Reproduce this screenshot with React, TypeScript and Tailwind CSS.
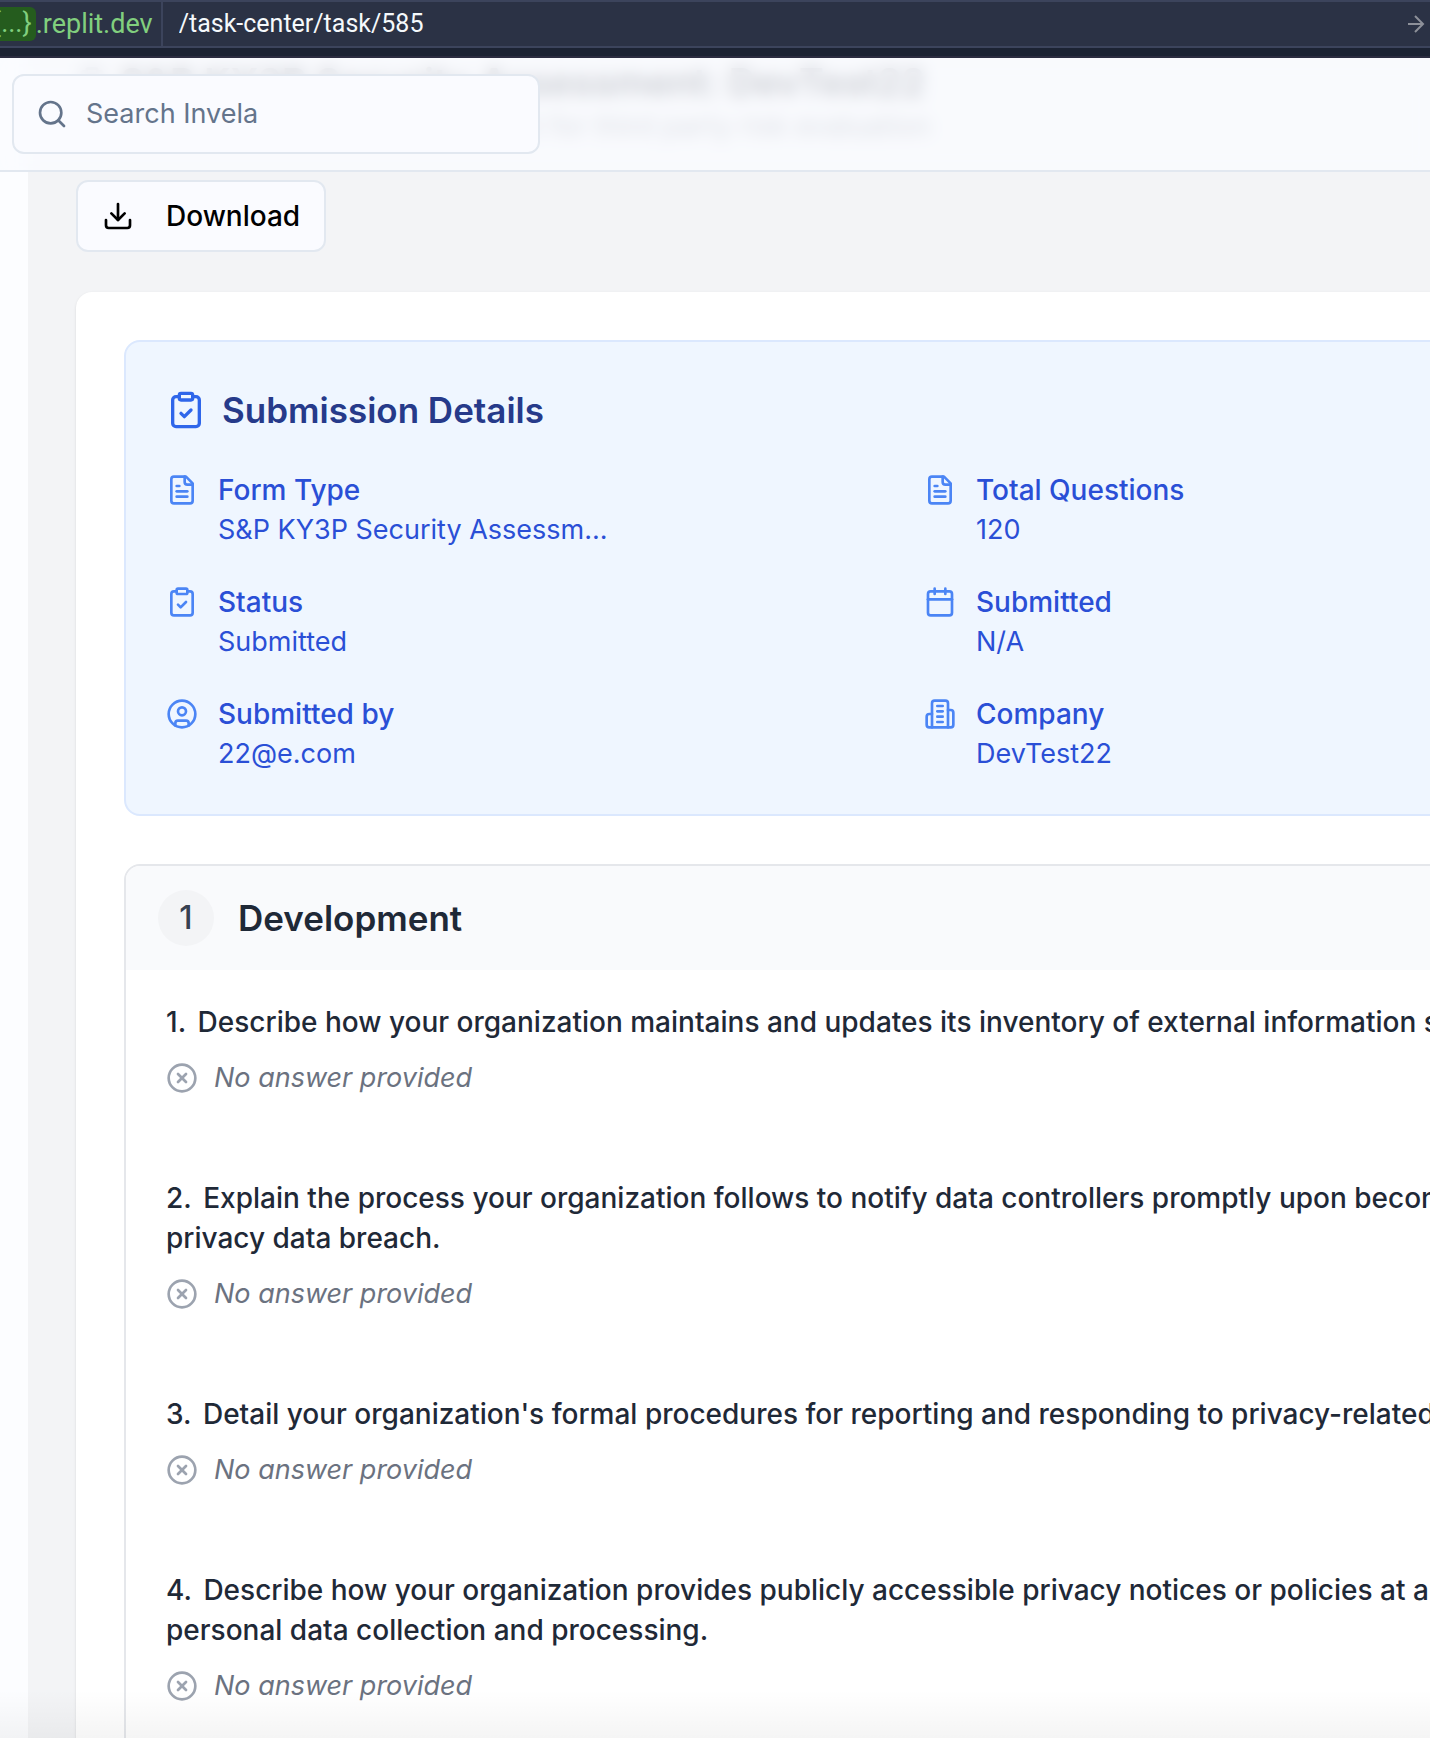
import type { ReactNode } from "react";

type IconProps = { className?: string; children?: ReactNode };

function Icon({ className, children }: IconProps) {
  return (
    <svg
      viewBox="0 0 24 24"
      fill="none"
      stroke="currentColor"
      strokeWidth={2}
      strokeLinecap="round"
      strokeLinejoin="round"
      aria-hidden="true"
      className={className}
    >
      {children}
    </svg>
  );
}

const SearchIcon = ({ className }: IconProps) => (
  <Icon className={className}>
    <circle cx="11" cy="11" r="8" />
    <path d="m21 21-4.3-4.3" />
  </Icon>
);

const DownloadIcon = ({ className }: IconProps) => (
  <Icon className={className}>
    <path d="M21 15v4a2 2 0 0 1-2 2H5a2 2 0 0 1-2-2v-4" />
    <path d="m7 10 5 5 5-5" />
    <path d="M12 15V3" />
  </Icon>
);

const ClipboardIcon = ({ className }: IconProps) => (
  <Icon className={className}>
    <rect width="8" height="4" x="8" y="2" rx="1" ry="1" />
    <path d="M16 4h2a2 2 0 0 1 2 2v14a2 2 0 0 1-2 2H6a2 2 0 0 1-2-2V6a2 2 0 0 1 2-2h2" />
    <path d="m9 14 2 2 4-4" />
  </Icon>
);

const FileIcon = ({ className }: IconProps) => (
  <Icon className={className}>
    <path d="M15 2H6a2 2 0 0 0-2 2v16a2 2 0 0 0 2 2h12a2 2 0 0 0 2-2V7Z" />
    <path d="M14 2v4a2 2 0 0 0 2 2h4" />
    <path d="M10 9H8" />
    <path d="M16 13H8" />
    <path d="M16 17H8" />
  </Icon>
);

const CalendarIcon = ({ className }: IconProps) => (
  <Icon className={className}>
    <path d="M8 2v4" />
    <path d="M16 2v4" />
    <rect width="18" height="18" x="3" y="4" rx="2" />
    <path d="M3 10h18" />
  </Icon>
);

const UserIcon = ({ className }: IconProps) => (
  <Icon className={className}>
    <circle cx="12" cy="12" r="10" />
    <circle cx="12" cy="10" r="3" />
    <path d="M7 20.662V19a2 2 0 0 1 2-2h6a2 2 0 0 1 2 2v1.662" />
  </Icon>
);

const BuildingIcon = ({ className }: IconProps) => (
  <Icon className={className}>
    <path d="M6 22V4a2 2 0 0 1 2-2h8a2 2 0 0 1 2 2v18Z" />
    <path d="M6 12H4a2 2 0 0 0-2 2v6a2 2 0 0 0 2 2h2" />
    <path d="M18 9h2a2 2 0 0 1 2 2v9a2 2 0 0 1-2 2h-2" />
    <path d="M10 6h4" />
    <path d="M10 10h4" />
    <path d="M10 14h4" />
    <path d="M10 18h4" />
  </Icon>
);

const CircleXIcon = ({ className }: IconProps) => (
  <Icon className={className}>
    <circle cx="12" cy="12" r="10" />
    <path d="m15 9-6 6" />
    <path d="m9 9 6 6" />
  </Icon>
);

const details = [
  { icon: FileIcon, label: "Form Type", value: "S&P KY3P Security Assessm..." },
  { icon: FileIcon, label: "Total Questions", value: "120" },
  { icon: ClipboardIcon, label: "Status", value: "Submitted" },
  { icon: CalendarIcon, label: "Submitted", value: "N/A" },
  { icon: UserIcon, label: "Submitted by", value: "22@e.com" },
  { icon: BuildingIcon, label: "Company", value: "DevTest22" },
];

const questions = [
  "Describe how your organization maintains and updates its inventory of external information systems.",
  "Explain the process your organization follows to notify data controllers promptly upon becoming aware of a privacy data breach.",
  "Detail your organization's formal procedures for reporting and responding to privacy-related incidents.",
  "Describe how your organization provides publicly accessible privacy notices or policies at all points of personal data collection and processing.",
];

function AddressBar() {
  return (
    <div className="shrink-0 border-b-2 border-[#2b2c40] bg-[#1c2333] pb-2 font-[Roboto,sans-serif] leading-8">
      <div className="flex h-12 items-center border-y-2 border-[#3c445c] bg-[#2b3245]">
        <div className="flex h-full items-center border-r-2 border-[#3c445c] pr-2 text-[27px] text-[#81cf7e]">
          <span className="-ml-2 rounded-md bg-[#255c1e] pr-1 pb-0.5">{"{...}"}</span>
          <span>.replit.dev</span>
        </div>
        <input
          type="text"
          aria-label="Path"
          defaultValue="/task-center/task/585"
          className="min-w-0 flex-1 bg-transparent px-4 text-[25px] text-[#f5f9fc] outline-none"
        />
        <button type="button" aria-label="Go" className="mr-1 text-[#8d9099]">
          <svg viewBox="0 0 20 20" className="size-5" fill="none" stroke="currentColor" strokeWidth={2}>
            <path d="M2 10h15" />
            <path d="m9 2 8 8-8 8" />
          </svg>
        </button>
      </div>
    </div>
  );
}

export default function App() {
  return (
    <div className="relative flex h-screen flex-col overflow-hidden bg-[#fcfdff] font-[Inter,sans-serif] text-[28px] leading-10">
      <AddressBar />

      <div className="relative min-h-0 flex-1 overflow-hidden">
        <header className="absolute inset-x-0 top-0 z-10 border-b-2 border-[#e2e8f0] bg-[#fafbff]/80 px-3 py-4 backdrop-blur-sm">
          <label className="flex h-20 w-[528px] items-center gap-[18px] rounded-xl border-2 border-[#e2e8f0] bg-[#fafbff] px-[22px] text-[27px] text-[#64748b]">
            <SearchIcon className="size-8 shrink-0" />
            <input
              type="search"
              aria-label="Search Invela"
              placeholder="Search Invela"
              className="min-w-0 flex-1 bg-transparent outline-none placeholder:text-[#64748b]"
            />
          </label>
        </header>

        <main className="ml-7 min-w-[1760px] bg-gray-100 px-12">
          <div className="flex gap-3">
            <ClipboardIcon className="mt-2 size-8 text-gray-500" />
            <div>
              <h1 className="text-[38px] leading-12 font-semibold text-gray-900">
                S&amp;P KY3P Security Assessment: DevTest22
              </h1>
              <p className="text-gray-500">S&amp;P KY3P Security Assessment for third party risk evaluation</p>
            </div>
          </div>

          <button
            type="button"
            className="mt-[34px] flex h-18 items-center gap-8 rounded-xl border-2 border-[#e2e8f0] bg-[#fafbff] px-6 font-[450] text-black"
          >
            <DownloadIcon className="size-8" />
            Download
          </button>

          <div className="mt-10 rounded-2xl bg-white p-12 shadow-sm">
            <section className="rounded-2xl border-2 border-[#dbe8fe] bg-[#eff6ff] p-10">
              <h2 className="mb-8 flex items-center gap-4 text-[35px] leading-14 font-semibold text-[#263a8a]">
                <ClipboardIcon className="size-10 text-[#2f66ea]" />
                Submission Details
              </h2>
              <dl className="grid grid-cols-2 gap-8 text-[#2a4fd6]">
                {details.map(({ icon: DetailIcon, label, value }) => (
                  <div key={label} className="flex gap-5">
                    <DetailIcon className="mt-1 size-8 shrink-0 text-[#4b85f5]" />
                    <div>
                      <dt className="font-medium">{label}</dt>
                      <dd className="text-[27px]">{value}</dd>
                    </div>
                  </div>
                ))}
              </dl>
            </section>

            <section className="mt-12 overflow-hidden rounded-2xl border-2 border-gray-200">
              <div className="flex items-center gap-6 bg-[#f9fafc] px-8 py-6">
                <span className="flex size-14 items-center justify-center rounded-full bg-[#f3f4f6] text-[32px] font-medium text-[#374151]">
                  1
                </span>
                <h2 className="text-[35px] leading-14 font-semibold text-[#1f2937]">Development</h2>
              </div>
              <ol className="flex flex-col gap-20 px-10 pt-8 pb-20">
                {questions.map((question, index) => (
                  <li key={question}>
                    <h3 className="font-[450] text-[#1f2937]">
                      <span className="mr-1">{index + 1}.</span> {question}
                    </h3>
                    <p className="mt-4 flex items-center gap-4 text-[27px] text-[#6b7280] italic">
                      <CircleXIcon className="size-8 text-[#9ca3af]" />
                      No answer provided
                    </p>
                  </li>
                ))}
              </ol>
            </section>
          </div>
        </main>
      </div>

      <div className="pointer-events-none absolute inset-x-0 bottom-0 h-12 bg-linear-to-b from-transparent to-black/4" />
    </div>
  );
}
